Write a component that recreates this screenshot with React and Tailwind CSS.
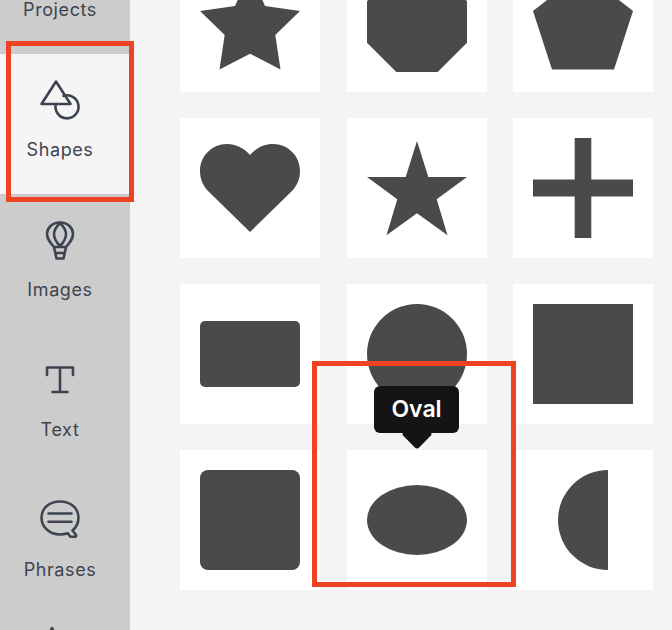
const fill = "#4a4a4a";

const Star = () => <polygon points="50,0 65,34 100,39 75.3,63 80.5,97.5 50,81.7 19.5,97.5 24.7,63 0,39 35,34" fill={fill} />;
const Octagon = () => <polygon points="29.3,0 70.7,0 100,29.3 100,70.7 70.7,100 29.3,100 0,70.7 0,29.3" fill={fill} />;
const Pentagon = () => <polygon points="50,0 100,39 81,97.5 19,97.5 0,39" fill={fill} />;
const Heart = () => (
  <path
    d="M50 17C44 10 36 6 27 6C12 6 0 18 0 33C0 41 3 47 7 52L50 94L93 52C97 47 100 41 100 33C100 18 88 6 73 6C64 6 56 10 50 17Z"
    fill={fill}
  />
);
const StarThin = () => <polygon points="50,3 61.3,39 100,39 69.7,61.3 80.5,97.3 50,75.3 19.5,97.3 30.3,61.3 0,39 38.7,39" fill={fill} />;
const Plus = () => <path d="M41.7 0H58.3V41.4H100V58.6H58.3V100H41.7V58.6H0V41.4H41.7Z" fill={fill} />;
const RoundRect = () => <rect x="0" y="17" width="100" height="66" rx="5" fill={fill} />;
const Circle = () => <circle cx="50" cy="50" r="50" fill={fill} />;
const Square = () => <rect width="100" height="100" fill={fill} />;
const RoundSquare = () => <rect width="100" height="100" rx="8" fill={fill} />;
const Oval = () => <ellipse cx="50" cy="50" rx="50" ry="35" fill={fill} />;
const HalfCircle = () => <path d="M75 0A50 50 0 0 0 75 100Z" fill={fill} />;

const shapes = [Star, Octagon, Pentagon, Heart, StarThin, Plus, RoundRect, Circle, Square, RoundSquare, Oval, HalfCircle];

const Icon = ({ children }) => (
  <svg
    width="40"
    height="40"
    viewBox="0 0 40 40"
    fill="none"
    stroke="#3d4450"
    strokeWidth="2.6"
    strokeLinecap="round"
    strokeLinejoin="round"
    className="overflow-visible"
  >
    {children}
  </svg>
);

const navItems = [
  { label: "Projects", icon: null },
  {
    label: "Shapes",
    active: true,
    icon: (
      <>
        <path d="M16 1.5L1.5 24H30.5Z" />
        <path d="M23.5 15.9A11.5 11.5 0 1 1 15.9 24" />
      </>
    ),
  },
  {
    label: "Images",
    icon: (
      <>
        <path d="M20 2.5C12 2.5 7 8 7 14C7 19 10 22.5 14 27H26C30 22.5 33 19 33 14C33 8 28 2.5 20 2.5Z" />
        <path d="M20 3C15 8 14 11 14 14C14 18 16 22 20 26C24 22 26 18 26 14C26 11 25 8 20 3Z" />
        <path d="M14 27L16.5 38.5H23.5L26 27M15.5 33H24.5" />
      </>
    ),
  },
  {
    label: "Text",
    icon: <path d="M7 15V7.5H33V15M20 7.5V32M12.5 32H27.5" />,
  },
  {
    label: "Phrases",
    icon: (
      <>
        <path d="M28 33.3C25.5 34 23 34.5 20 34.5C9.5 34.5 1.5 27 1.5 17.5C1.5 8 9.5 1.5 20 1.5C30.5 1.5 38.5 8 38.5 17.5C38.5 23 36 27.5 32.5 30.5L36 35C36.3 36 36 36.8 35 36.8H31C30 36.8 29 35 28 33.3Z" />
        <path d="M8.5 13.5H31.5M8.5 21.7H31.5" />
      </>
    ),
  },
  {
    label: "",
    icon: <path d="M12 -12L6 0M12 -12L18 0" />,
  },
];

export default function App() {
  return (
    <div className="relative flex h-[630px] w-[672px] overflow-hidden bg-[#f4f4f4] font-['Inter',sans-serif]">
      {/* Sidebar */}
      <div className="w-[130px] shrink-0 bg-[#cccccc]">
        <div className="-mt-[86px]">
          {navItems.map((item, i) => (
            <div
              key={i}
              className={`flex h-[140px] flex-col items-center pr-[10px] pt-[26px] ${item.active ? "bg-[#f5f5f5]" : ""}`}
            >
              <div className="h-10 w-10">{item.icon && <Icon>{item.icon}</Icon>}</div>
              <span className="mt-[18px] text-[18px] leading-6 tracking-[0.6px] text-[#3d4450]">{item.label}</span>
            </div>
          ))}
        </div>
      </div>

      {/* Shape grid */}
      <div className="flex-1 pl-[50px]">
        <div className="-mt-[48px] grid w-[473px] grid-cols-[140px_140px_140px] justify-between gap-y-[26px]">
          {shapes.map((Shape, i) => (
            <div key={i} className="h-[140px] bg-white p-5">
              <svg width="100" height="100" viewBox="0 0 100 100" className="block">
                <Shape />
              </svg>
            </div>
          ))}
        </div>
      </div>

      {/* Tooltip */}
      <div className="absolute left-[374px] top-[386px] flex h-[47px] w-[85px] items-center justify-center rounded-md bg-[#141414] text-[23px] font-semibold text-white">
        <div className="absolute left-[31.5px] top-[37px] h-[22px] w-[22px] rotate-45 rounded-[3px] bg-[#141414]" />
        <span className="relative">Oval</span>
      </div>

      {/* Annotations */}
      <div className="absolute left-[6px] top-[41px] h-[161px] w-[128px] border-[5px] border-[#ee4323]" />
      <div className="absolute left-[312px] top-[361px] h-[226px] w-[204px] border-[5px] border-[#ee4323]" />
    </div>
  );
}
